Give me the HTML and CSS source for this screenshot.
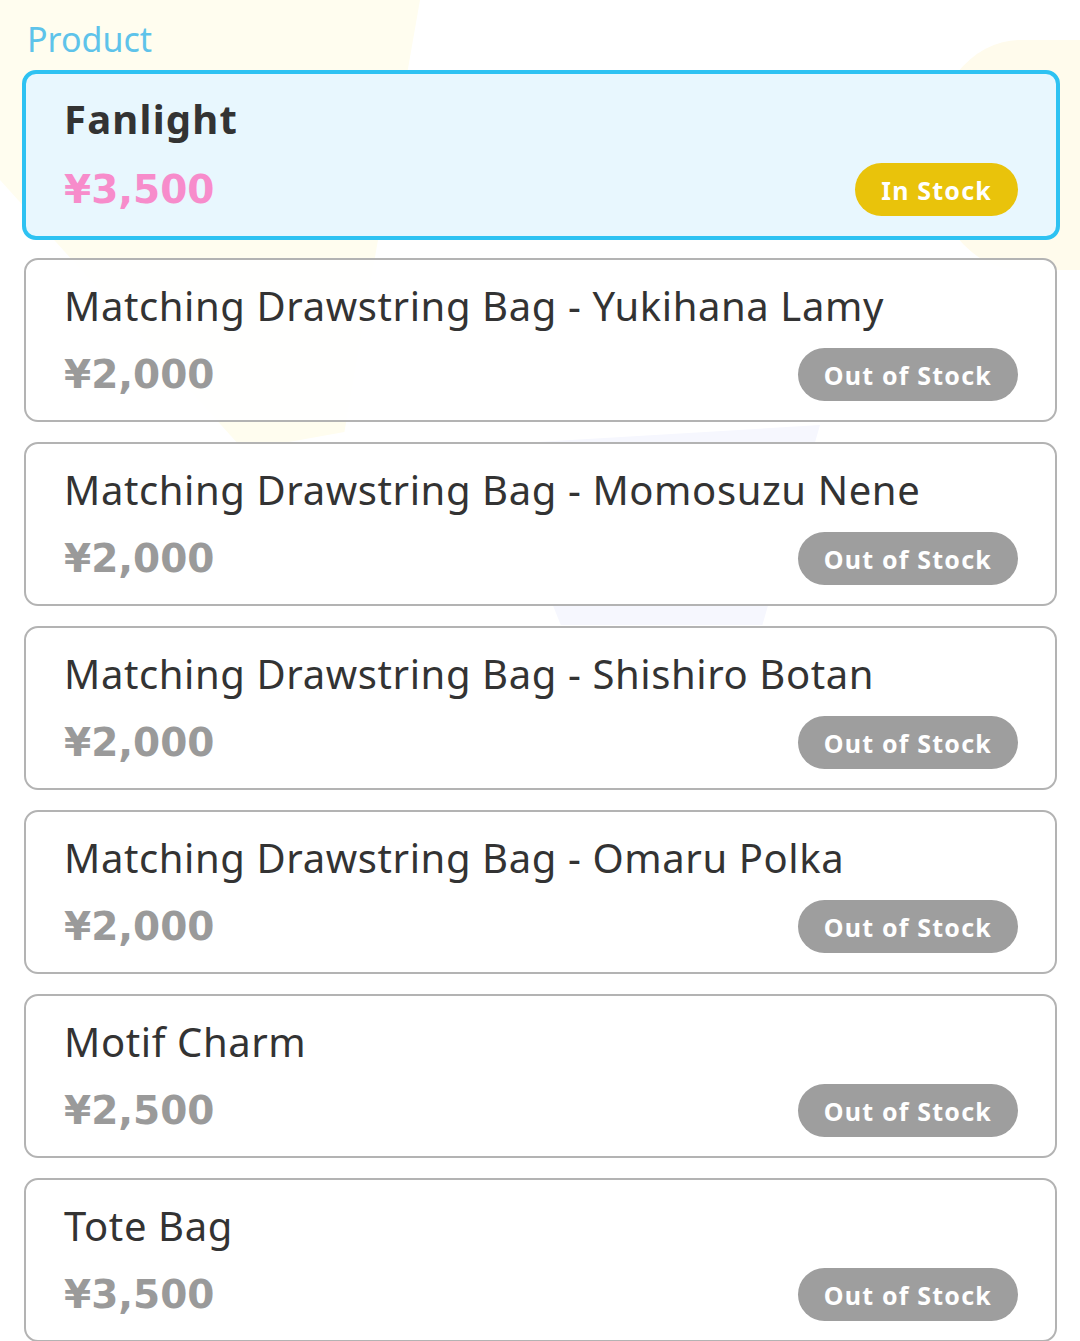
FILE: index.html
```html
<!DOCTYPE html>
<html lang="en">
    <head>
        <title>Product</title>
        <link rel="stylesheet" href="styles.css">
    </head>
    <body>
        <!--faint shapes behind the list-->
        <div class="decor">
            <span class="blob blob-yellow"></span>
            <span class="blob blob-right"></span>
            <span class="blob blob-lilac"></span>
        </div>

        <main class="page">
            <h2 class="section-label">Product</h2>

            <div class="product-list">
                <div class="card active">
                    <div class="card-title">Fanlight</div>
                    <div class="card-bottom">
                        <span class="price">¥3,500</span>
                        <span class="stock in">In Stock</span>
                    </div>
                </div>
                <div class="card">
                    <div class="card-title">Matching Drawstring Bag - Yukihana Lamy</div>
                    <div class="card-bottom">
                        <span class="price">¥2,000</span>
                        <span class="stock">Out of Stock</span>
                    </div>
                </div>
                <div class="card">
                    <div class="card-title">Matching Drawstring Bag - Momosuzu Nene</div>
                    <div class="card-bottom">
                        <span class="price">¥2,000</span>
                        <span class="stock">Out of Stock</span>
                    </div>
                </div>
                <div class="card">
                    <div class="card-title">Matching Drawstring Bag - Shishiro Botan</div>
                    <div class="card-bottom">
                        <span class="price">¥2,000</span>
                        <span class="stock">Out of Stock</span>
                    </div>
                </div>
                <div class="card">
                    <div class="card-title">Matching Drawstring Bag - Omaru Polka</div>
                    <div class="card-bottom">
                        <span class="price">¥2,000</span>
                        <span class="stock">Out of Stock</span>
                    </div>
                </div>
                <div class="card">
                    <div class="card-title">Motif Charm</div>
                    <div class="card-bottom">
                        <span class="price">¥2,500</span>
                        <span class="stock">Out of Stock</span>
                    </div>
                </div>
                <div class="card">
                    <div class="card-title">Tote Bag</div>
                    <div class="card-bottom">
                        <span class="price">¥3,500</span>
                        <span class="stock">Out of Stock</span>
                    </div>
                </div>
            </div>
        </main>
    </body>
</html>
```

FILE: styles.css
```css
body
{
    margin: 0;
    background-color: #ffffff;
    font-family: 'Noto Sans', 'Open Sans', sans-serif;
    color: #333333;
    overflow: hidden;
}

.decor
{
    position: absolute;
    inset: 0;
    z-index: 0;
    pointer-events: none;
}

.blob
{
    position: absolute;
    display: block;
}

.blob-yellow
{
    left: 0;
    top: 0;
    width: 420px;
    height: 450px;
    background-color: #fffdef;
    clip-path: polygon(0 0, 100% 0, 82% 96%, 58% 100%, 0 40%);
}

.blob-right
{
    left: 930px;
    top: 40px;
    width: 180px;
    height: 230px;
    background-color: #fffbec;
    border-radius: 50% 0 0 50%;
}

.blob-lilac
{
    left: 460px;
    top: 425px;
    width: 360px;
    height: 200px;
    background-color: #f6f7fe;
    clip-path: polygon(8% 10%, 100% 0, 84% 100%, 28% 100%);
}

.page
{
    position: relative;
    z-index: 1;
    padding: 19px 23px 0 24px;
}

.section-label
{
    margin: 0 0 11px 3px;
    font-size: 34px;
    line-height: 40px;
    font-weight: 400;
    color: #5ec3ea;
}

.product-list
{
    display: flex;
    flex-direction: column;
    gap: 20px;
}

.card
{
    display: flex;
    flex-direction: column;
    gap: 14px;
    padding: 18px 37px 19px 38px;
    border: 2px solid #b3b3b3;
    border-radius: 14px;
    background-color: rgba(255, 255, 255, 0.92);
}

.card.active
{
    margin: 0 -3px -2px -2px;
    padding: 17px 38px 20px 38px;
    gap: 16px;
    border: 4px solid #2ec2f2;
    background-color: #e8f7fe;
}

.card-title
{
    font-size: 40px;
    line-height: 56px;
    font-weight: 400;
    letter-spacing: 0.6px;
    white-space: nowrap;
}

.active .card-title
{
    font-weight: 700;
    letter-spacing: 1.2px;
}

.card-bottom
{
    display: flex;
    justify-content: space-between;
    align-items: center;
    height: 53px;
}

.price
{
    font-family: 'DejaVu Sans', 'Noto Sans', sans-serif;
    font-size: 39px;
    line-height: 53px;
    font-weight: 700;
    color: #9a9a9a;
}

.active .price
{
    color: #f78ccb;
}

.stock
{
    display: flex;
    align-items: center;
    height: 53px;
    padding: 0 26px;
    border-radius: 27px;
    background-color: #9e9e9e;
    color: #ffffff;
    font-size: 25px;
    font-weight: 700;
    letter-spacing: 1.2px;
}

.stock.in
{
    background-color: #e9c30b;
}
```
